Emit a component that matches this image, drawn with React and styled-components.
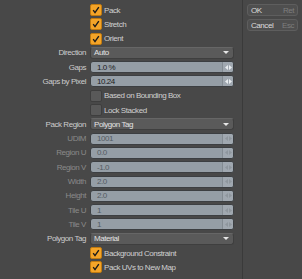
import React from 'react';
import styled, { createGlobalStyle } from 'styled-components';

const GlobalStyle = createGlobalStyle`
  html, body {
    margin: 0;
    padding: 0;
    background: #484848;
  }
  body {
    font-family: "Liberation Sans", Arial, sans-serif;
    font-size: 8px;
    letter-spacing: -0.45px;
    color: #d4d4d4;
  }
`;

const Layout = styled.div`
  display: flex;
  width: 302px;
  height: 279px;
  background: #484848;
`;

const Form = styled.div`
  width: 242px;
  border-right: 1px solid #3a3a3a;
  padding-top: 4px;
  display: flex;
  flex-direction: column;
  gap: 2.3px;
`;

const Row = styled.div`
  display: grid;
  grid-template-columns: 86px 144px;
  column-gap: 4px;
  align-items: center;
  height: 12px;
`;

const Label = styled.div`
  text-align: right;
  white-space: nowrap;
  color: ${({ $disabled }) => ($disabled ? '#8a8a8a' : '#cdcdcd')};
`;

const CheckWrap = styled.div`
  display: flex;
  align-items: center;
  gap: 2px;
  white-space: nowrap;
  color: #d0d0d0;
`;

const Box = styled.div`
  width: 12px;
  height: 12px;
  border-radius: 2px;
  box-sizing: border-box;
  display: flex;
  align-items: center;
  justify-content: center;
  background: ${({ $on }) => ($on ? '#f4a428' : '#595959')};
  border: 1px solid ${({ $on }) => ($on ? '#c07a10' : '#3e3e3e')};
`;

const Select = styled.div`
  height: 12px;
  box-sizing: border-box;
  border-radius: 3px;
  background: #5a5a5a;
  border: 1px solid #3f3f3f;
  border-top-color: #666;
  display: flex;
  align-items: center;
  justify-content: space-between;
  padding: 0 4px 0 3px;
  color: #e2e2e2;
`;

const Arrow = styled.span`
  width: 0;
  height: 0;
  border-left: 3px solid transparent;
  border-right: 3px solid transparent;
  border-top: 3px solid #e6e6e6;
`;

const Field = styled.div`
  height: 12px;
  box-sizing: border-box;
  border-radius: 3px;
  background: #959ea6;
  border: 1px solid #3c3f42;
  display: flex;
  align-items: center;
  overflow: hidden;
  color: ${({ $disabled }) => ($disabled ? '#535b62' : '#1c1c1c')};
`;

const Value = styled.span`
  flex: 1;
  padding-left: 6px;
`;

const Handle = styled.span`
  width: 10px;
  height: 100%;
  border-left: 1px solid #838b92;
  background: #a0a8b0;
  display: flex;
  align-items: center;
  justify-content: center;
`;

const Side = styled.div`
  flex: 1;
  padding: 4px 4px 0 4px;
  display: flex;
  flex-direction: column;
  gap: 3px;
`;

const Button = styled.div`
  height: 12px;
  box-sizing: border-box;
  border-radius: 3px;
  background: #4f4f4f;
  border: 1px solid #5e5e5e;
  display: flex;
  align-items: center;
  justify-content: space-between;
  padding: 0 3px;
  color: #dcdcdc;
`;

const Key = styled.span`
  color: #7e7e7e;
`;

const Check = () => (
  <svg width="8" height="8" viewBox="0 0 8 8">
    <path d="M1.2 4.2 L3 6.6 L6.8 1.2" fill="none" stroke="#1a1a1a" strokeWidth="1.4" />
  </svg>
);

const Grip = ({ $disabled }) => (
  <svg width="7" height="5" viewBox="0 0 7 5">
    <path d="M0 2.5 L3 0 L3 5 Z M7 2.5 L4 0 L4 5 Z" fill={$disabled ? '#8e969d' : '#e8ecef'} />
  </svg>
);

const CheckRow = ({ label, on }) => (
  <Row>
    <span />
    <CheckWrap>
      <Box $on={on}>{on && <Check />}</Box>
      {label}
    </CheckWrap>
  </Row>
);

const NumRow = ({ label, value, disabled }) => (
  <Row>
    <Label $disabled={disabled}>{label}</Label>
    <Field $disabled={disabled}>
      <Value>{value}</Value>
      <Handle>
        <Grip $disabled={disabled} />
      </Handle>
    </Field>
  </Row>
);

const SelectRow = ({ label, value }) => (
  <Row>
    <Label>{label}</Label>
    <Select>
      {value}
      <Arrow />
    </Select>
  </Row>
);

export default function App() {
  return (
    <>
      <GlobalStyle />
      <Layout>
        <Form>
          <CheckRow label="Pack" on />
          <CheckRow label="Stretch" on />
          <CheckRow label="Orient" on />
          <SelectRow label="Direction" value="Auto" />
          <NumRow label="Gaps" value="1.0 %" />
          <NumRow label="Gaps by Pixel" value="10.24" />
          <CheckRow label="Based on Bounding Box" />
          <CheckRow label="Lock Stacked" />
          <SelectRow label="Pack Region" value="Polygon Tag" />
          <NumRow label="UDIM" value="1001" disabled />
          <NumRow label="Region U" value="0.0" disabled />
          <NumRow label="Region V" value="-1.0" disabled />
          <NumRow label="Width" value="2.0" disabled />
          <NumRow label="Height" value="2.0" disabled />
          <NumRow label="Tile U" value="1" disabled />
          <NumRow label="Tile V" value="1" disabled />
          <SelectRow label="Polygon Tag" value="Material" />
          <CheckRow label="Background Constraint" on />
          <CheckRow label="Pack UVs to New Map" on />
        </Form>
        <Side>
          <Button>
            OK<Key>Ret</Key>
          </Button>
          <Button>
            Cancel<Key>Esc</Key>
          </Button>
        </Side>
      </Layout>
    </>
  );
}
